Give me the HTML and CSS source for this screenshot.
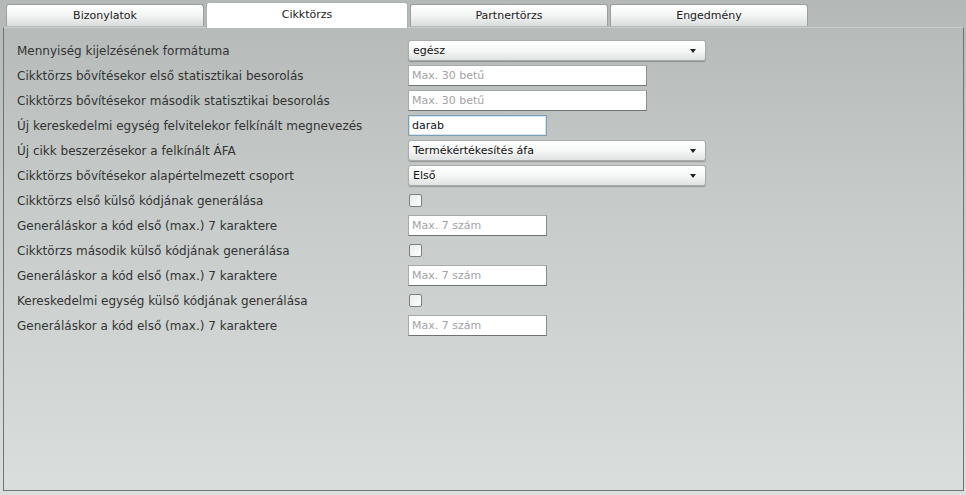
FILE: index.html
```html
<!DOCTYPE html>
<html lang="hu">
<head>
<meta charset="utf-8">
<link rel="stylesheet" href="styles.css">
</head>
<body>
<div class="tabs">
  <div class="tab">Bizonylatok</div>
  <div class="tab active">Cikktörzs</div>
  <div class="tab">Partnertörzs</div>
  <div class="tab">Engedmény</div>
</div>
<div class="panel">
  <div class="row"><span class="label">Mennyiség kijelzésének formátuma</span><div class="combo"><span>egész</span><i class="arrow"></i></div></div>
  <div class="row"><span class="label">Cikktörzs bővítésekor első statisztikai besorolás</span><div class="text wide ph">Max. 30 betű</div></div>
  <div class="row"><span class="label">Cikktörzs bővítésekor második statisztikai besorolás</span><div class="text wide ph">Max. 30 betű</div></div>
  <div class="row"><span class="label">Új kereskedelmi egység felvitelekor felkínált megnevezés</span><div class="text short focus">darab</div></div>
  <div class="row"><span class="label">Új cikk beszerzésekor a felkínált ÁFA</span><div class="combo"><span>Termékértékesítés áfa</span><i class="arrow"></i></div></div>
  <div class="row"><span class="label">Cikktörzs bővítésekor alapértelmezett csoport</span><div class="combo"><span>Első</span><i class="arrow"></i></div></div>
  <div class="row"><span class="label">Cikktörzs első külső kódjának generálása</span><div class="check"></div></div>
  <div class="row"><span class="label">Generáláskor a kód első (max.) 7 karaktere</span><div class="text short ph">Max. 7 szám</div></div>
  <div class="row"><span class="label">Cikktörzs második külső kódjának generálása</span><div class="check"></div></div>
  <div class="row"><span class="label">Generáláskor a kód első (max.) 7 karaktere</span><div class="text short ph">Max. 7 szám</div></div>
  <div class="row"><span class="label">Kereskedelmi egység külső kódjának generálása</span><div class="check"></div></div>
  <div class="row"><span class="label">Generáláskor a kód első (max.) 7 karaktere</span><div class="text short ph">Max. 7 szám</div></div>
</div>
</body>
</html>
```
FILE: styles.css
```css
html, body {
  margin: 0;
  height: 100%;
}
body {
  background: linear-gradient(to bottom, #b4b9b7 0%, #c6cbc9 40%, #dadedd 100%);
  font-family: "DejaVu Sans", Verdana, sans-serif;
  font-size: 11px;
  color: #2a2a2a;
  overflow: hidden;
}
.tabs {
  display: flex;
  gap: 2px;
  padding-left: 6px;
  height: 27px;
  align-items: flex-end;
}
.tab {
  width: 198px;
  height: 22px;
  margin-bottom: 1px;
  box-sizing: border-box;
  border: 1px solid #9aa09f;
  border-bottom: none;
  border-radius: 3px 3px 0 0;
  background: linear-gradient(to bottom, #ffffff 0%, #f3f4f4 50%, #d9dcdc 100%);
  text-align: center;
  line-height: 21px;
  color: #222;
}
.tab.active {
  width: 202px;
  height: 26px;
  margin-bottom: -1px;
  background: #ffffff;
  border-color: #a9b4b8;
  line-height: 24px;
  position: relative;
  z-index: 1;
}
.panel {
  margin: 0 2px 0 3px;
  height: 464px;
  box-sizing: border-box;
  border-left: 1px solid #6f7475;
  border-right: 1px solid #6f7475;
  border-bottom: 1px solid #6f7475;
  border-top: 1px solid #c9cecd;
  padding: 10px 0 0 13px;
}
.row {
  display: flex;
  align-items: center;
  height: 25px;
}
.label {
  width: 391px;
  flex: none;
  font-size: 12px;
  color: #333;
}
.combo {
  width: 298px;
  height: 21px;
  box-sizing: border-box;
  border: 1px solid #a8acad;
  border-radius: 3px;
  background: linear-gradient(to bottom, #ffffff 0%, #f6f7f7 50%, #dfe2e2 100%);
  box-shadow: 0 1px 1px rgba(0,0,0,0.25);
  display: flex;
  align-items: center;
  justify-content: space-between;
  padding: 0 9px 0 4px;
  color: #111;
}
.arrow {
  width: 0;
  height: 0;
  border-left: 3.5px solid transparent;
  border-right: 3.5px solid transparent;
  border-top: 4px solid #222;
}
.text {
  height: 21px;
  box-sizing: border-box;
  border: 1px solid #a5a9aa;
  border-bottom-color: #6e7273;
  border-right-color: #8a8e8f;
  background: #ffffff;
  padding: 0 3px;
  line-height: 19px;
  color: #111;
}
.text.wide { width: 239px; }
.text.short { width: 139px; }
.text.ph { color: #a3a3a3; }
.text.focus {
  border: 1px solid #7e9fb8;
  box-shadow: inset 0 0 0 1px #d5e3ee;
}
.check {
  width: 13px;
  height: 13px;
  margin-left: 1px;
  box-sizing: border-box;
  border: 1px solid #7c8081;
  border-radius: 2px;
  background: linear-gradient(135deg, #e8ebec, #ffffff);
}
```
